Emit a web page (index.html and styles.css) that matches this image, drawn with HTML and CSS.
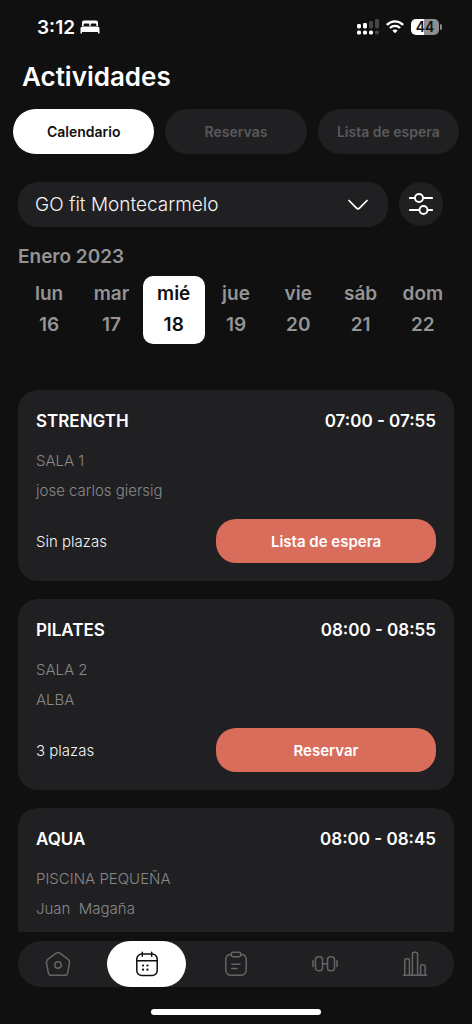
FILE: index.html
```html
<!DOCTYPE html>
<html lang="es">
<head>
<meta charset="utf-8">
<meta name="viewport" content="width=device-width, initial-scale=1">
<title>Actividades</title>
<link rel="stylesheet" href="styles.css">
</head>
<body>
<div class="app">
  <div class="status">
    <div class="status-group">
      <span class="clock">3:12</span>
      <svg class="bed" width="20" height="14" viewBox="0 0 20 14" fill="#fff" aria-hidden="true">
        <path d="M2 6V2.5Q2 .5 4 .5H16Q18 .5 18 2.500V6H16.400V4.800Q16.400 3.600 15.200 3.600H11.800Q10.700 3.600 10.700 4.800V6H9.300V4.800Q9.300 3.600 8.200 3.600H4.800Q3.600 3.600 3.600 4.800V6Z"/>
        <path d="M.5 13.500V8.600Q.5 6.500 2.600 6.500H17.400Q19.500 6.500 19.500 8.600V13.500H18V12H2V13.500Z"/>
      </svg>
    </div>
    <div class="status-group status-right">
      <svg width="22" height="16" viewBox="0 0 22 16" aria-hidden="true">
        <g fill="#fff"><rect x="0" y="5" width="4" height="4.500" rx="1.400"/><rect x="6" y="4" width="4" height="5.500" rx="1.400"/><rect x="0" y="11.500" width="4" height="4" rx="1.600"/><rect x="6" y="11.500" width="4" height="4" rx="1.600"/><rect x="12" y="11.500" width="4" height="4" rx="1.600"/></g>
        <g fill="#454545"><rect x="12" y="2" width="4" height="7.500" rx="1.400"/><rect x="18" y="0" width="4" height="9.500" rx="1.400"/><rect x="18" y="11.500" width="4" height="4" rx="1.600"/></g>
      </svg>
      <svg width="18" height="14" viewBox="0 0 18 14" fill="none" stroke="#fff" stroke-width="2.300" aria-hidden="true">
        <path d="M.8 4.900Q4.500 1.300 9 1.300T17.200 4.900"/><path d="M3.900 8Q6.200 5.900 9 5.900T14.100 8"/>
        <path d="M6.300 10.500Q9 8.300 11.700 10.500L9 13.300Z" fill="#fff" stroke="none"/>
      </svg>
      <div class="battery"><span>44</span></div>
    </div>
  </div>

  <h1 class="title">Actividades</h1>

  <div class="tabs">
    <button class="tab tab-on" type="button">Calendario</button>
    <button class="tab" type="button">Reservas</button>
    <button class="tab" type="button">Lista de espera</button>
  </div>

  <div class="filters">
    <div class="center">
      <select class="center-select" aria-label="Centro"><option>GO fit Montecarmelo</option></select>
      <svg class="chevron" width="20" height="12" viewBox="0 0 20 12" fill="none" stroke="#fff" stroke-width="1.700" stroke-linecap="round" stroke-linejoin="round" aria-hidden="true"><path d="M1 1.500L8.500 9.200Q10 10.700 11.500 9.200L19 1.500"/></svg>
    </div>
    <button class="filter" type="button" aria-label="Filtros">
      <svg width="24" height="24" viewBox="0 0 24 24" fill="none" stroke="#fff" stroke-width="1.900" stroke-linecap="round" aria-hidden="true"><path d="M.9 6H6M14 6H17M17 6H23.100M.9 18H10M18.500 18H23.100"/><circle cx="10" cy="6" r="4" fill="#202022"/><circle cx="14.500" cy="18" r="4" fill="#202022"/></svg>
    </button>
  </div>

  <h2 class="month">Enero 2023</h2>
  <div class="days">
    <button class="day" type="button"><span>lun</span><span>16</span></button>
    <button class="day" type="button"><span>mar</span><span>17</span></button>
    <button class="day day-on" type="button"><span>mié</span><span>18</span></button>
    <button class="day" type="button"><span>jue</span><span>19</span></button>
    <button class="day" type="button"><span>vie</span><span>20</span></button>
    <button class="day" type="button"><span>sáb</span><span>21</span></button>
    <button class="day" type="button"><span>dom</span><span>22</span></button>
  </div>

  <main class="list">
    <article class="card">
      <div class="card-head"><h3>STRENGTH</h3><span>07:00 - 07:55</span></div>
      <p class="info">SALA 1</p>
      <p class="info">jose carlos giersig</p>
      <div class="card-foot"><span>Sin plazas</span><button class="book" type="button">Lista de espera</button></div>
    </article>
    <article class="card">
      <div class="card-head"><h3>PILATES</h3><span>08:00 - 08:55</span></div>
      <p class="info">SALA 2</p>
      <p class="info">ALBA</p>
      <div class="card-foot"><span>3 plazas</span><button class="book" type="button">Reservar</button></div>
    </article>
    <article class="card">
      <div class="card-head"><h3>AQUA</h3><span>08:00 - 08:45</span></div>
      <p class="info">PISCINA PEQUEÑA</p>
      <p class="info">Juan  Magaña</p>
    </article>
  </main>

  <nav class="nav">
    <button class="nav-item" type="button" aria-label="Inicio">
      <svg width="26" height="26" viewBox="0 0 26 26"><path d="M11.200 2.100Q13 .8 14.800 2.100L23.200 8.400Q24.800 9.700 24.500 11.600L22.700 21.800Q22.200 24.300 19.700 24.300H6.300Q3.800 24.300 3.300 21.800L1.500 11.600Q1.200 9.700 2.800 8.400Z"/><circle cx="13" cy="14" r="3.200"/></svg>
    </button>
    <button class="nav-item nav-on" type="button" aria-label="Calendario">
      <svg width="26" height="26" viewBox="0 0 26 26"><rect x="2.800" y="3" width="20.400" height="21.500" rx="5"/><path d="M2.800 9.700H23.200M8.300 1.300V5.200M17.700 1.300V5.200"/><path d="M9 14.500h.1M13.400 14.500h.1M9 18.700h.1M13.400 18.700h.1" stroke-width="2.200"/></svg>
    </button>
    <button class="nav-item" type="button" aria-label="Rutinas">
      <svg width="26" height="26" viewBox="0 0 26 26"><path d="M8.200 3.400H7.500Q2.800 3.600 2.800 8.500V18.500Q2.800 24.300 8.600 24.300H17.400Q23.200 24.300 23.200 18.500V8.500Q23.200 3.600 18.500 3.400H17.800"/><rect x="8.200" y="1.300" width="9.600" height="4.500" rx="2"/><path d="M8.800 13.300H17M8.800 17.600H14"/></svg>
    </button>
    <button class="nav-item" type="button" aria-label="Entrenamiento">
      <svg width="26" height="26" viewBox="0 0 26 26"><rect x="3.500" y="5.700" width="7" height="14" rx="3"/><rect x="15.500" y="5.700" width="7" height="14" rx="3"/><path d="M10.500 12.700H15.500M1 9.800V15.600M25 9.800V15.600"/></svg>
    </button>
    <button class="nav-item" type="button" aria-label="Progreso">
      <svg width="26" height="26" viewBox="0 0 26 26"><path d="M1.500 24.300H24.500M2.800 24.300V9.500Q2.800 7.800 4.800 7.800H5.400Q7.400 7.800 7.400 9.500V24.300M10.400 24.300V3.200Q10.400 1.300 12.400 1.300H13.600Q15.600 1.300 15.600 3.200V24.300M18.600 24.300V15.500Q18.600 13.700 20.600 13.700H21.200Q23.200 13.700 23.200 15.500V24.300"/></svg>
    </button>
  </nav>
  <div class="home-bar"></div>
</div>
</body>
</html>
```
FILE: styles.css
```css
* { box-sizing: border-box; }
body {
  margin: 0;
  background: #101010;
  color: #fff;
  font-family: Inter, sans-serif;
}
h1, h2, h3, p { margin: 0; }
button, select { border: 0; padding: 0; font-family: inherit; color: inherit; }
svg { display: block; flex: none; }

.app {
  display: flex;
  flex-direction: column;
  height: 100vh;
  overflow: hidden;
}

.status {
  display: flex;
  flex: none;
  justify-content: space-between;
  align-items: center;
  height: 54px;
  padding: 0 30px 0 37px;
}
.status-group { display: flex; align-items: center; gap: 5px; }
.status-right { gap: 7px; }
.clock { font-size: 19px; font-weight: 600; }
.battery {
  position: relative;
  width: 28px;
  height: 16px;
  margin-right: 3px;
  border-radius: 5px;
  background: linear-gradient(90deg, #fff 45%, #8e8e8e 45%);
  color: #101010;
  font-size: 14px;
  font-weight: 600;
  line-height: 16px;
  text-align: center;
}
.battery::after {
  content: "";
  position: absolute;
  top: 5px;
  right: -3px;
  width: 2px;
  height: 6px;
  border-radius: 0 2px 2px 0;
  background: #8e8e8e;
}

.title {
  flex: none;
  padding: 6px 22px 0;
  font-size: 26px;
  font-weight: 600;
  line-height: 34px;
}

.tabs { display: flex; flex: none; gap: 11px; margin-top: 15px; padding: 0 13px; }
.tab {
  flex: 1 1 0;
  height: 45px;
  border-radius: 23px;
  background: #202022;
  color: #59595b;
  font-size: 14px;
  font-weight: 600;
}
.tab-on { background: #fff; color: #101010; }

.filters { display: flex; flex: none; gap: 11px; margin-top: 28px; padding: 0 29px 0 18px; }
.center { position: relative; flex: 1; }
.center-select {
  display: block;
  width: 100%;
  height: 45px;
  padding: 0 50px 0 17px;
  border-radius: 20px;
  appearance: none;
  background: #202022;
  color: #f4f4f4;
  font-size: 19px;
  font-weight: 300;
}
.chevron { position: absolute; top: 17px; right: 20px; pointer-events: none; }
.filter {
  display: grid;
  place-items: center;
  width: 44px;
  height: 44px;
  border-radius: 50%;
  background: #202022;
}

.month {
  flex: none;
  margin-top: 18px;
  padding: 0 18px;
  color: #949494;
  font-size: 19px;
  font-weight: 600;
  line-height: 24px;
}
.days {
  display: grid;
  flex: none;
  grid-template-columns: repeat(7, 1fr);
  margin-top: 7px;
  padding: 0 18px;
}
.day {
  display: flex;
  flex-direction: column;
  align-items: center;
  gap: 7px;
  height: 68px;
  padding-top: 6px;
  border-radius: 10px;
  background: none;
  color: #949494;
  font-size: 19px;
  font-weight: 600;
  line-height: 24px;
}
.day-on { background: #fff; color: #101010; }

.list {
  display: flex;
  flex: 1;
  flex-direction: column;
  gap: 18px;
  min-height: 0;
  margin-top: 46px;
  padding: 0 18px;
  overflow: hidden;
}
.card {
  flex: none;
  min-height: 191px;
  padding: 19px 18px 18px;
  border-radius: 20px;
  background: #202022;
}
.card-head {
  display: flex;
  justify-content: space-between;
  margin-bottom: 16px;
  font-size: 17px;
  font-weight: 600;
  line-height: 24px;
}
.card-head h3 { font-size: inherit; font-weight: inherit; }
.info {
  margin-bottom: 6px;
  color: #88888a;
  font-size: 15px;
  font-weight: 300;
  line-height: 24px;
  white-space: pre;
}
.card-foot {
  display: flex;
  justify-content: space-between;
  align-items: center;
  margin-top: 16px;
  color: #f4f4f4;
  font-size: 15px;
  font-weight: 300;
}
.book {
  width: 55%;
  height: 44px;
  border-radius: 20px;
  background: #d96d5b;
  color: #fff;
  font-size: 15px;
  font-weight: 600;
}

.nav {
  display: flex;
  flex: none;
  justify-content: space-between;
  margin: 9px 18px 0;
  border-radius: 23px;
  background: #202022;
}
.nav-item {
  display: grid;
  place-items: center;
  width: 79px;
  height: 46px;
  border-radius: 23px;
  background: none;
  color: #656567;
}
.nav-item svg {
  fill: none;
  stroke: currentColor;
  stroke-width: 1.5px;
  stroke-linecap: round;
  stroke-linejoin: round;
}
.nav-on { background: #fff; color: #101010; }
.home-bar {
  flex: none;
  align-self: center;
  width: 36%;
  height: 6px;
  margin: 22px 0 9px;
  border-radius: 3px;
  background: #fff;
}
```
